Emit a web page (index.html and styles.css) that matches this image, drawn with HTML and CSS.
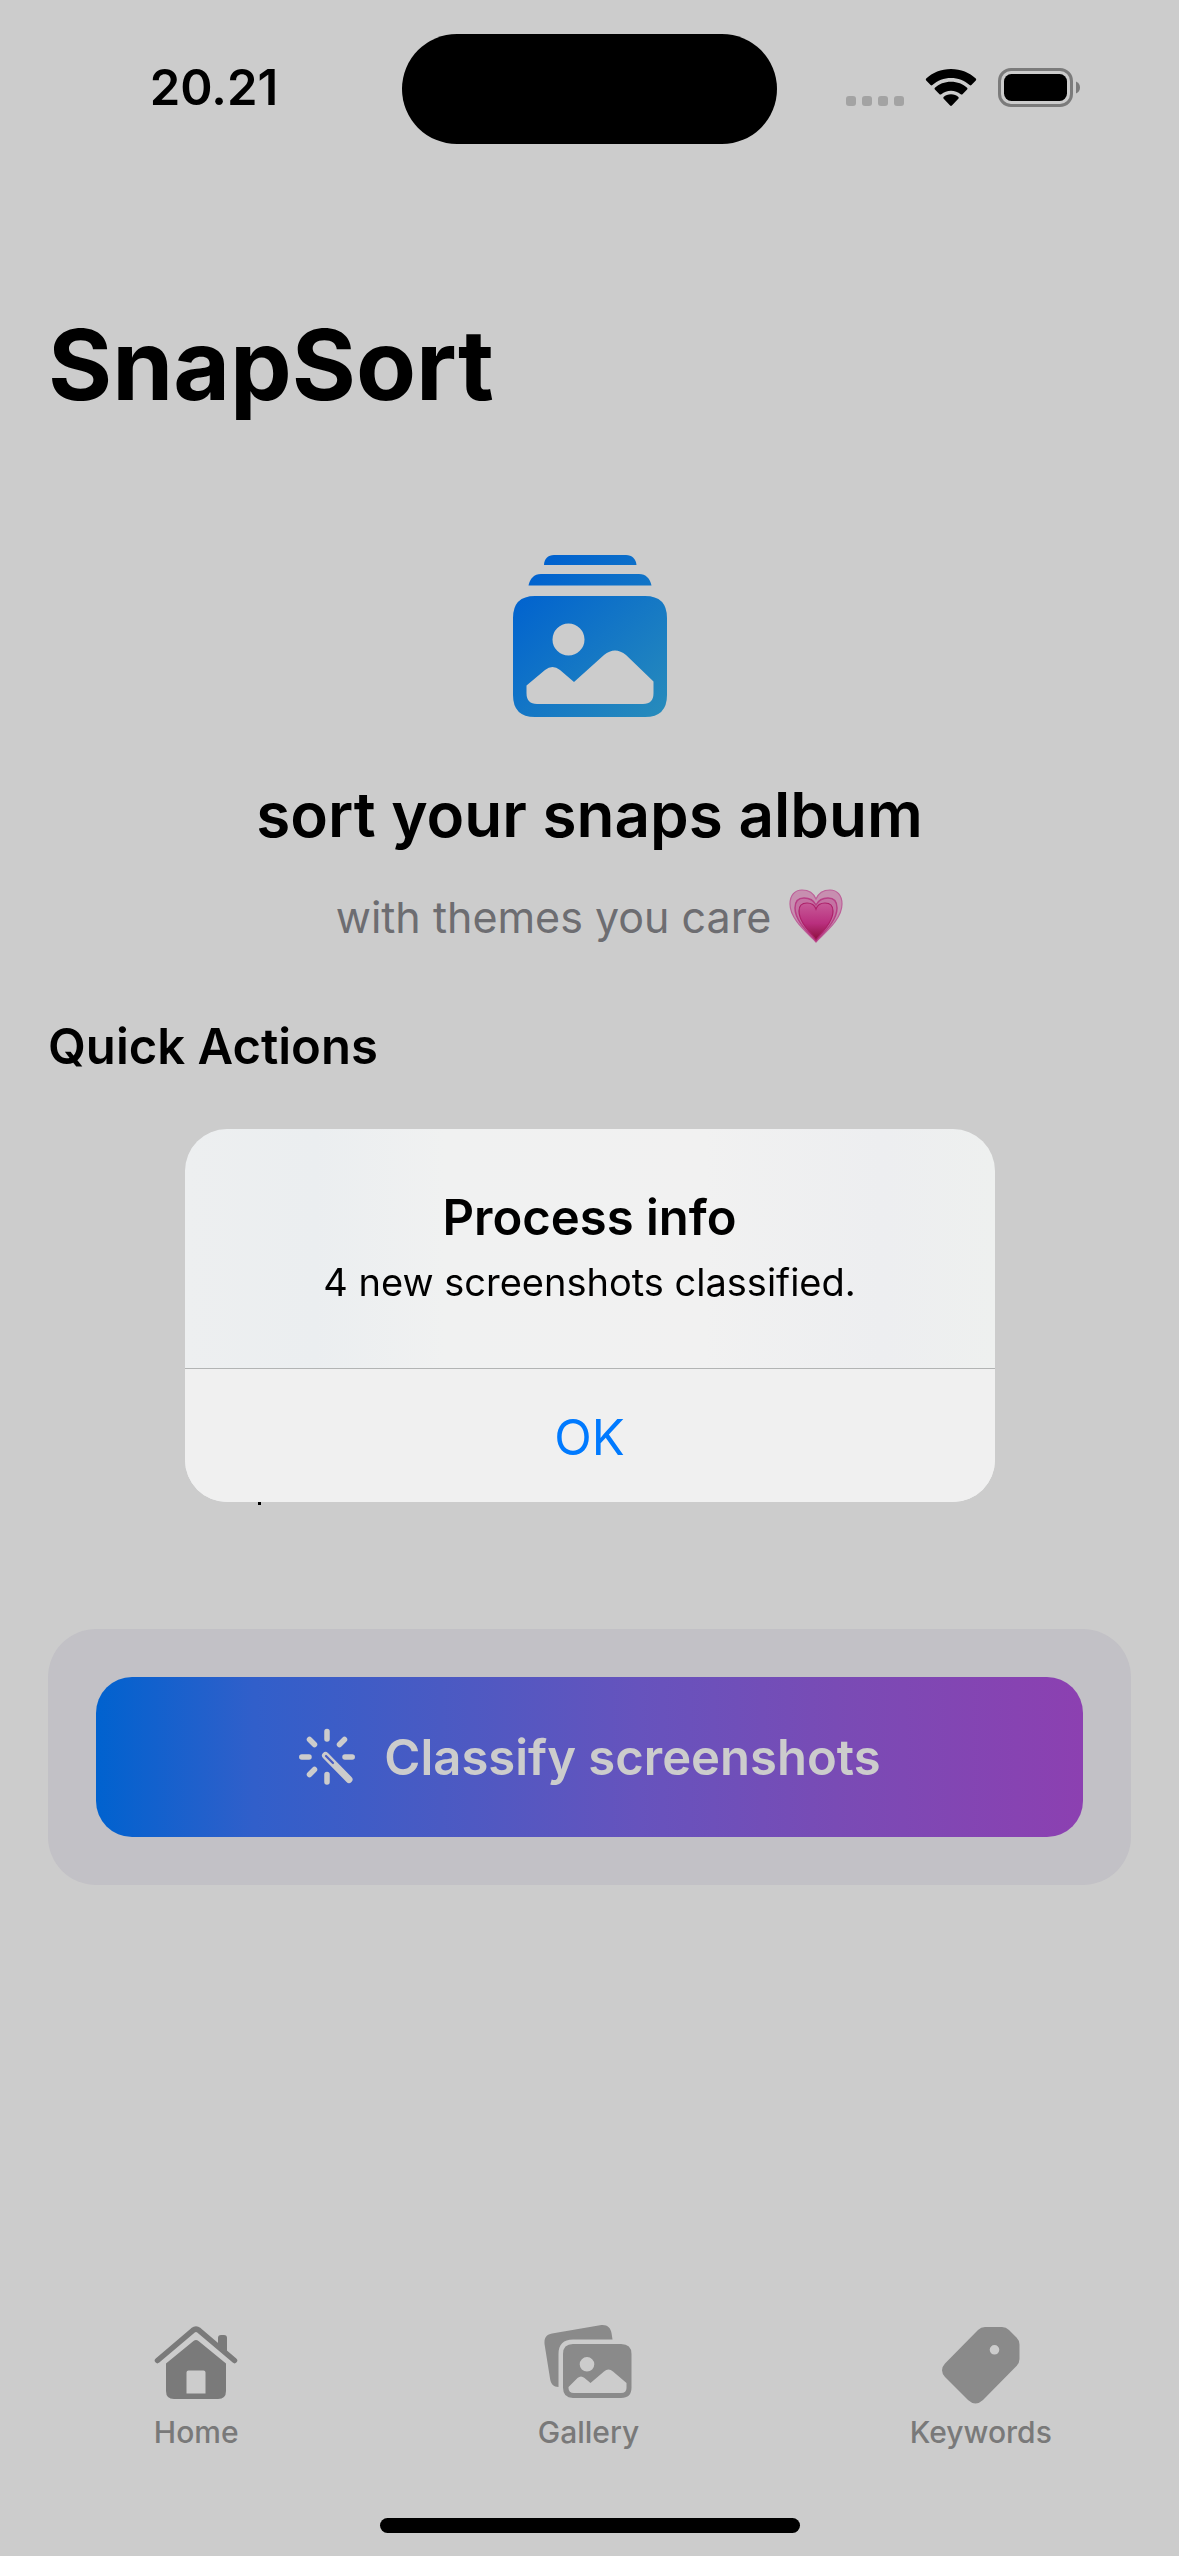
FILE: index.html
```html
<!DOCTYPE html>
<html lang="en">
<head>
<meta charset="utf-8">
<meta name="viewport" content="width=device-width, initial-scale=1">
<title>SnapSort</title>
<link rel="stylesheet" href="styles.css">
</head>
<body>
<div class="app">
  <header class="status">
    <time class="status-time">20.21</time>
    <div class="island"></div>
    <div class="status-icons">
      <svg width="58" height="40" viewBox="0 0 58 40" fill="#a3a3a3" aria-hidden="true">
        <rect x="0" y="28" width="10" height="10" rx="3"/><rect x="16" y="28" width="10" height="10" rx="3"/><rect x="32" y="28" width="10" height="10" rx="3"/><rect x="48" y="28" width="10" height="10" rx="3"/>
      </svg>
      <svg width="52" height="40" viewBox="0 0 52 40" aria-hidden="true">
        <path d="M26 1C16 1 7.500 4.700 1.200 10.600Q.3 11.500 1.200 12.500L5.600 17Q6.500 17.800 7.400 17C12.500 12.500 19 10 26 10S39.500 12.500 44.600 17Q45.500 17.800 46.400 17L50.800 12.500Q51.700 11.500 50.800 10.600C44.500 4.700 36 1 26 1Z"/>
        <path d="M26 13.800C19.500 13.800 14 16.100 9.900 19.800Q9 20.700 9.900 21.600L14.500 26.200Q15.400 27 16.300 26.200C19 23.900 22.300 22.700 26 22.700S33 23.900 35.700 26.200Q36.600 27 37.500 26.200L42.100 21.600Q43 20.700 42.100 19.800C38 16.100 32.500 13.800 26 13.800Z"/>
        <path d="M26 26.300C23 26.300 20.500 27.300 18.600 29Q17.800 29.900 18.700 30.800L25.100 37.600Q26 38.500 26.900 37.600L33.300 30.800Q34.200 29.900 33.400 29C31.500 27.300 29 26.300 26 26.300Z"/>
      </svg>
      <svg width="83" height="40" viewBox="0 0 83 40" aria-hidden="true">
        <rect x="1.500" y="1.500" width="72" height="36" rx="11.500" fill="none" stroke="#7b7b7b" stroke-width="3"/>
        <rect x="6" y="6" width="63" height="27" rx="7.500"/>
        <path d="M78 13.500C80.500 14.500 82 16.800 82 19.500S80.500 24.500 78 25.500Z" fill="#7b7b7b"/>
      </svg>
    </div>
  </header>

  <main class="content">
    <h1 class="title">SnapSort</h1>

    <section class="hero">
      <svg class="hero-icon" viewBox="0 0 154 162" aria-hidden="true">
        <defs>
          <linearGradient id="sea" gradientUnits="userSpaceOnUse" x1="20" y1="20" x2="154" y2="162">
            <stop offset="0" stop-color="#0062cf"/><stop offset="1" stop-color="#288cbb"/>
          </linearGradient>
        </defs>
        <g fill="url(#sea)">
          <path d="M31 10C31 4 35 0 41 0H113C119 0 123 4 123.500 10Z"/>
          <path d="M15.500 30.500C17 23.500 21 19 28 19H126C133 19 137 23.500 138.500 30.500Z"/>
          <path fill-rule="evenodd" d="M22 41H132Q154 41 154 63V140Q154 162 132 162H22Q0 162 0 140V63Q0 41 22 41ZM55.500 68.500a16 16 0 1 0 0 32a16 16 0 1 0 0-32ZM13.500 130.500V138Q13.500 149 24 149H130Q140.500 149 140.500 138V126.500L113 100Q102 91 91 100L61 127L47 115Q39.500 109 32 115Z"/>
        </g>
      </svg>
      <h2 class="hero-title">sort your snaps album</h2>
      <p class="hero-sub">with themes you care
        <svg class="heart" viewBox="0 0 54 54" role="img" aria-label="growing heart">
          <defs><linearGradient id="pink" x1="0" y1="0" x2="0" y2="1"><stop offset="0" stop-color="#c75a98"/><stop offset=".55" stop-color="#b92f7e"/><stop offset="1" stop-color="#8c0f3c"/></linearGradient></defs>
          <path fill="#c78fb0" stroke="#bd6199" stroke-width="1.200" d="M27 53C20 45 1 31 1 15C1 6 6 1 13 1C20 1 25 5 27 10C29 5 34 1 41 1C48 1 53 6 53 15C53 31 34 45 27 53Z"/>
          <path fill="#c473a3" stroke="#b83f85" stroke-width="1.500" d="M27 52C20 44 6 32 6 19C6 12 10 9 15 9C21 9 25 12 27 16C29 12 33 9 39 9C44 9 48 12 48 19C48 32 34 44 27 52Z"/>
          <path fill="url(#pink)" stroke="#ad2069" stroke-width="1.200" d="M27 51C21 43 10 33 10 22C10 17 13 14 18 14C23 14 26 17 27 20C28 17 31 14 36 14C41 14 44 17 44 22C44 33 33 43 27 51Z"/>
        </svg>
      </p>
    </section>

    <h3 class="section-title">Quick Actions</h3>
    <div class="covered"><i class="stem"></i></div>

    <div class="panel">
      <button class="classify" type="button">
        <svg width="58" height="58" viewBox="0 0 58 58" fill="none" stroke="#ccc" stroke-width="5.500" stroke-linecap="round" aria-hidden="true">
          <path d="M29 3.500V11M29 46.500V54M3.800 29H11M47 29H54.200M11.500 11.500L16.500 16.500M46.500 11.500L41.500 16.500M11.500 46.500L16.500 41.500"/>
          <path d="M27.500 27.500L51 51.500" stroke-width="7"/>
          <path d="M28 28L35 35" stroke="#475bc3" stroke-width="2.200"/>
        </svg>
        <span>Classify screenshots</span>
      </button>
    </div>
  </main>

  <nav class="tabs">
    <a class="tab" href="#home">
      <svg width="88" height="80" viewBox="0 0 88 80" fill="#7a7a7a" aria-hidden="true">
        <path d="M5.500 36.500L41 6.300Q44 4 47 6.300L82.500 36.500" fill="none" stroke="#7a7a7a" stroke-width="5.500" stroke-linecap="round" stroke-linejoin="round"/>
        <path d="M66 24V14Q66 11 69 11H72Q75 11 75 14V31Z"/>
        <path fill-rule="evenodd" d="M14 39.500L41.500 17Q44 15 46.500 17L74 39.500V67Q74 75 66 75H22Q14 75 14 67ZM36.500 46.500Q34.500 46.500 34.500 48.500V69.500H53.500V48.500Q53.500 46.500 51.500 46.500Z"/>
      </svg>
      <span>Home</span>
    </a>
    <a class="tab" href="#gallery">
      <svg width="88" height="80" viewBox="0 0 88 80" fill="#8a8a8a" aria-hidden="true">
        <path d="M14.500 63C9.500 63 7 60 6.200 55.500L.6 20.500C-.2 14 2.500 10.500 8 9.600L56 1.300C63 .2 66.500 3.500 67.500 9L68.500 15.500H29C19.500 15.500 14.500 20.500 14.500 30Z"/>
        <path fill-rule="evenodd" d="M29 20H77Q87.500 20 87.500 30V63.500Q87.500 74 77 74H29Q19 74 19 63.500V30Q19 20 29 20ZM43 33a7.300 7.300 0 1 0 0 14.600a7.300 7.300 0 1 0 0-14.600ZM24.500 63V64Q24.500 69 30 69H77Q82.500 69 82.500 64V59L69 47.500Q64.500 43.500 60 47.500L46.500 59L40.500 54Q37 51 33.500 54Z"/>
      </svg>
      <span>Gallery</span>
    </a>
    <a class="tab" href="#keywords">
      <svg width="88" height="80" viewBox="0 0 88 80" fill="#8a8a8a" aria-hidden="true">
        <path fill-rule="evenodd" d="M48 3H65Q69 3 72 6L79.500 13.500Q82.500 16.500 82.500 20.500V35Q82.500 39 79.500 42L46 76Q38.500 83 31 76L8 53Q2 46 8 39.500L41 6Q44 3 48 3ZM57.500 21a4.800 4.800 0 1 0 0 9.600a4.800 4.800 0 1 0 0-9.600Z"/>
      </svg>
      <span>Keywords</span>
    </a>
  </nav>
  <div class="home-indicator"></div>
</div>

<div class="overlay">
  <div class="alert" role="alertdialog" aria-labelledby="alert-title" aria-describedby="alert-text">
    <div class="alert-body">
      <h2 class="alert-title" id="alert-title">Process info</h2>
      <p class="alert-text" id="alert-text">4 new screenshots classified.</p>
    </div>
    <button class="alert-ok" type="button">OK</button>
  </div>
</div>
</body>
</html>
```
FILE: styles.css
```css
* {
  box-sizing: border-box;
}

body,
h1,
h2,
h3,
p {
  margin: 0;
}

body {
  background: #ccc;
  color: #000;
  font-family: Inter, "Liberation Sans", sans-serif;
}

button {
  border: 0;
  font-family: inherit;
}

svg {
  display: block;
  flex: none;
}

.app {
  display: flex;
  flex-direction: column;
  min-height: 100vh;
}

/* Status bar */
.status {
  display: grid;
  grid-template-columns: 1fr 375px 1fr;
  align-items: center;
  padding-top: 34px;
}

.status-time {
  padding: 0 0 2px 26px;
  font-size: 49px;
  font-weight: 600;
  line-height: 64px;
  text-align: center;
}

.island {
  height: 110px;
  border-radius: 55px;
  background: #000;
}

.status-icons {
  display: flex;
  justify-content: center;
  gap: 21px;
  padding: 0 30px 2px 0;
}

/* Main column */
.content {
  display: flex;
  flex: 1;
  flex-direction: column;
  padding: 161px 48px 0;
}

.title {
  font-size: 98px;
  font-weight: 700;
  line-height: 120px;
}

.hero {
  display: flex;
  flex-direction: column;
  align-items: center;
  padding-top: 130px;
}

.hero-icon {
  width: 154px;
  height: 162px;
}

.hero-title {
  margin-top: 58px;
  font-size: 62px;
  font-weight: 600;
  line-height: 80px;
}

.hero-sub {
  display: flex;
  gap: 18px;
  margin-top: 34px;
  color: #6d6d71;
  font-size: 43px;
  line-height: 56px;
}

.heart {
  width: 54px;
  height: 54px;
}

.section-title {
  margin-top: 70px;
  font-size: 49px;
  font-weight: 600;
  line-height: 64px;
}

.covered {
  height: 550px;
  padding: 0 210px;
}

.stem {
  display: block;
  width: 3px;
  height: 426px;
  background: linear-gradient(#0000 400px, #000 400px);
}

.panel {
  padding: 48px;
  border-radius: 48px;
  background: #c2c1c6;
}

.classify {
  display: flex;
  align-items: center;
  justify-content: center;
  gap: 28px;
  width: 100%;
  height: 160px;
  border-radius: 36px;
  background: linear-gradient(90deg, #0062cf, #315fca 16%, #4a5ac3 35%, #6653bd 55%, #794bb5 75%, #8c40b1);
  color: #ccc;
  font-size: 49px;
  font-weight: 600;
}

/* Tab bar */
.tabs {
  display: grid;
  grid-template-columns: repeat(3, 1fr);
  padding: 0 2px 66px 0;
}

.tab {
  display: flex;
  flex-direction: column;
  align-items: center;
  gap: 8px;
  color: #797979;
  font-size: 30px;
  font-weight: 500;
  line-height: 40px;
  text-decoration: none;
}

.home-indicator {
  width: 420px;
  height: 15px;
  margin: 0 auto 23px;
  border-radius: 8px;
  background: #000;
}

/* Alert */
.overlay {
  position: fixed;
  inset: 0;
  display: flex;
  align-items: center;
  justify-content: center;
  padding: 177px 24px 102px;
}

.alert {
  width: 810px;
  max-width: 100%;
  overflow: hidden;
  border-radius: 42px;
  background: linear-gradient(90deg, #edeff0, #ebeef0 16%, #f0f1f1 32%, #f1f1f1 64%, #edeef0 86%, #eef0ef);
  text-align: center;
}

.alert-body {
  padding: 57px 48px 58px;
}

.alert-title {
  font-size: 49px;
  font-weight: 600;
  line-height: 64px;
}

.alert-text {
  margin-top: 4px;
  font-size: 38px;
  line-height: 56px;
}

.alert-ok {
  width: 100%;
  height: 134px;
  padding: 4px 0 0;
  border-top: 1px solid #b2b4b4;
  background: #f0f0f0;
  color: #007aff;
  font-size: 49px;
}
```
